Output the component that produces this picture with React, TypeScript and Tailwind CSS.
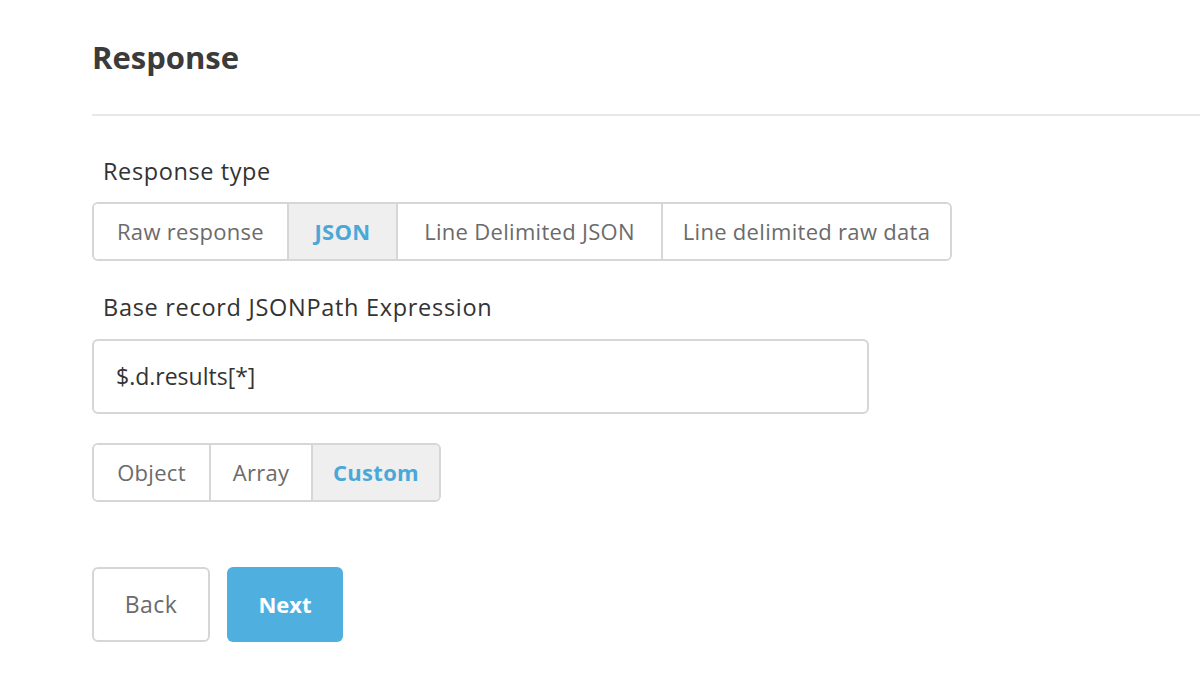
import React from "react";

const font = { fontFamily: "'Open Sans', Lato, Arial, sans-serif" };

type Seg = { label: string; w: string };

function Segmented({ items, active }: { items: Seg[]; active: string }) {
  return (
    <div className="flex h-[59px] w-fit rounded-[6px] border-2 border-[#d6d6d6] overflow-hidden">
      {items.map((it, i) => (
        <div
          key={it.label}
          className={
            "flex items-center justify-center text-[22px] tracking-[0.3px] " +
            it.w +
            (i > 0 ? " border-l-2 border-[#d6d6d6]" : "") +
            (it.label === active
              ? " bg-[#efefef] text-[#4aa8d8] font-bold"
              : " bg-white text-[#6b6b6b]")
          }
        >
          {it.label}
        </div>
      ))}
    </div>
  );
}

export default function App() {
  return (
    <div className="w-[1200px] h-[675px] bg-white overflow-hidden" style={font}>
      <div className="pl-[92px] pt-[37px]">
        <h1 className="text-[31px] font-bold text-[#3b3b3b] leading-[40px]">Response</h1>
        <div className="mt-[37px] h-[2px] bg-[#e8e8e8]" />
        <div className="pt-[40px]">
          <div className="pl-[11px] text-[23.5px] tracking-[0.6px] text-[#333] leading-[30px]">
            Response type
          </div>
          <div className="mt-[16px]">
            <Segmented
              items={[
                { label: "Raw response", w: "w-[193px]" },
                { label: "JSON", w: "w-[109px]" },
                { label: "Line Delimited JSON", w: "w-[265px]" },
                { label: "Line delimited raw data", w: "w-[289px]" },
              ]}
              active="JSON"
            />
          </div>
          <div className="mt-[31px] pl-[11px] text-[23.5px] tracking-[0.7px] text-[#333] leading-[30px]">
            Base record JSONPath Expression
          </div>
          <div className="mt-[17px] w-[777px] h-[75px] rounded-[6px] border-2 border-[#d6d6d6] flex items-center pl-[22px] text-[23px] text-[#333]">
            $.d.results[*]
          </div>
          <div className="mt-[29px]">
            <Segmented
              items={[
                { label: "Object", w: "w-[115px]" },
                { label: "Array", w: "w-[102px]" },
                { label: "Custom", w: "w-[128px]" },
              ]}
              active="Custom"
            />
          </div>
          <div className="mt-[65px] flex gap-[17px]">
            <button className="w-[118px] h-[75px] rounded-[6px] border-2 border-[#d6d6d6] bg-white text-[23px] tracking-[0.5px] text-[#6b6b6b]">
              Back
            </button>
            <button className="w-[116px] h-[75px] rounded-[6px] bg-[#4fb0e0] text-[22px] font-bold text-white">
              Next
            </button>
          </div>
        </div>
      </div>
    </div>
  );
}
